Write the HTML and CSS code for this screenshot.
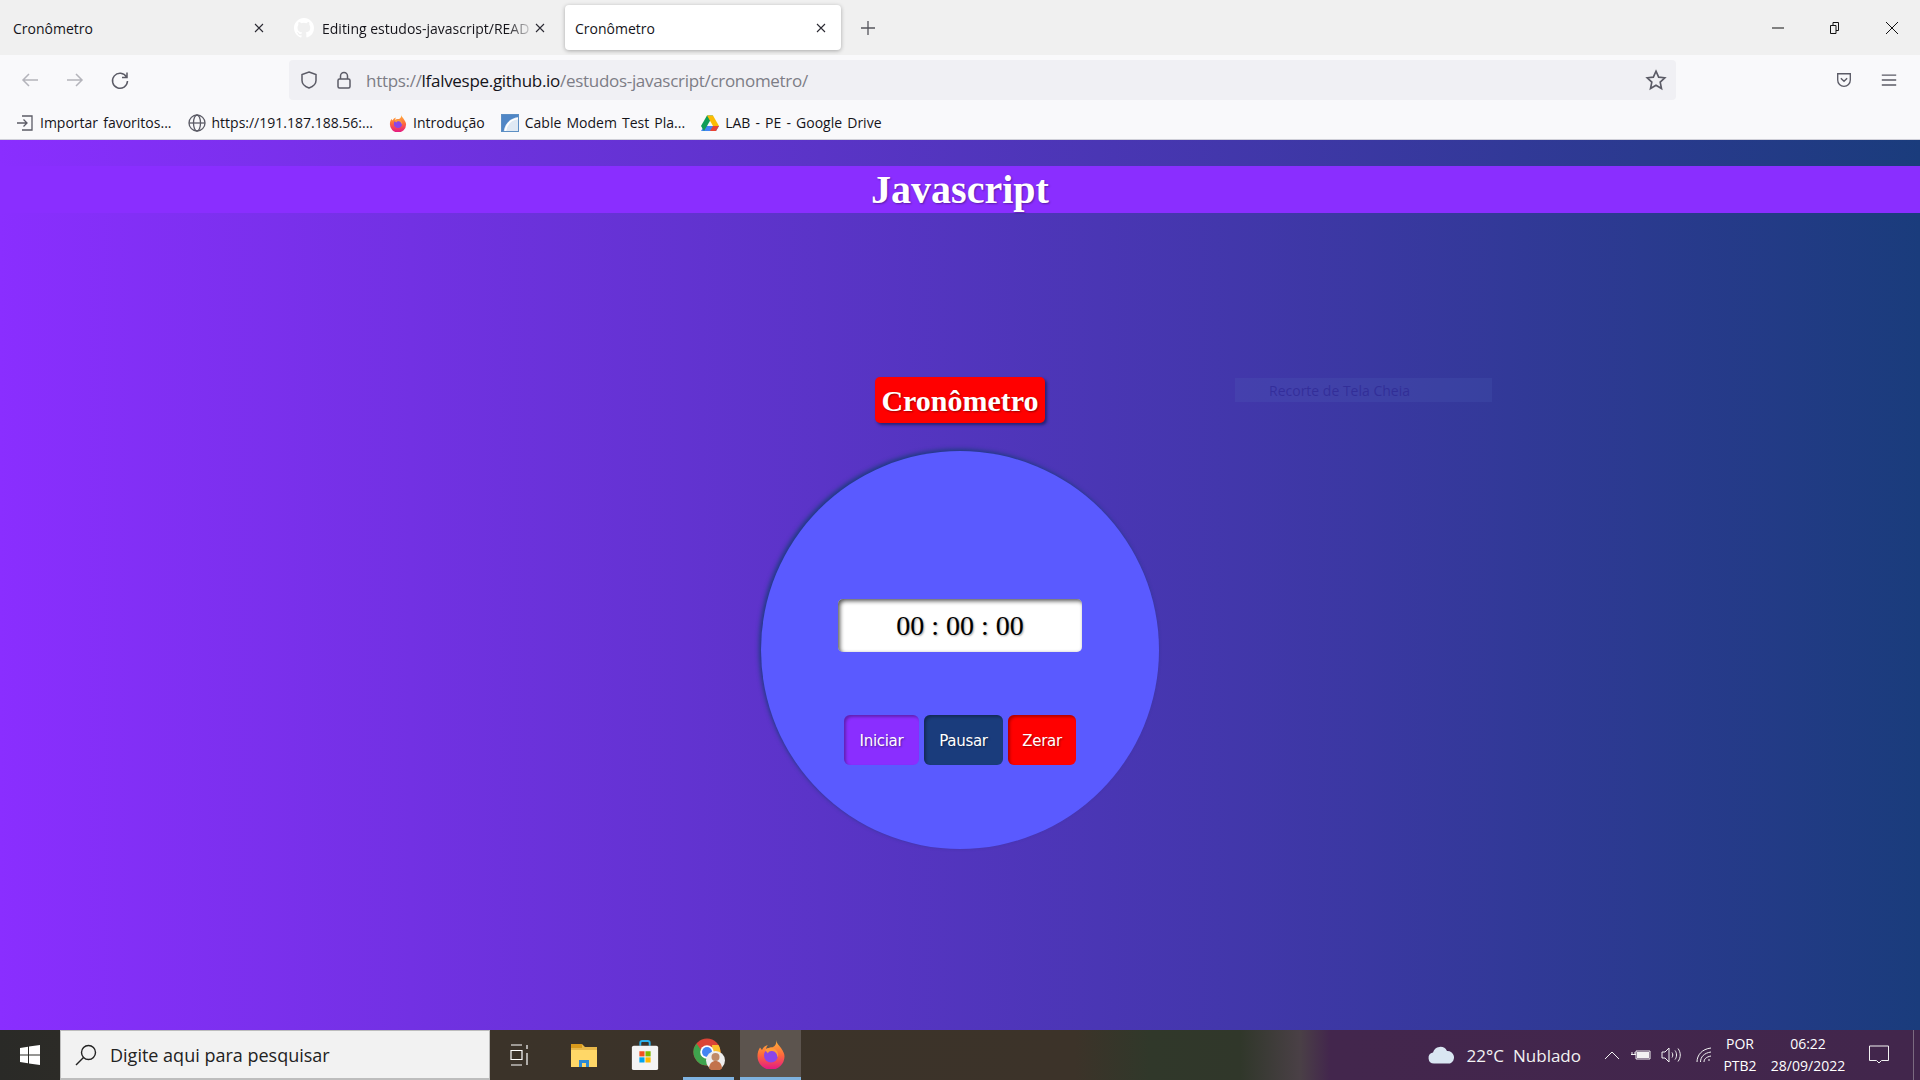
FILE: index.html
```html
<!DOCTYPE html>
<html lang="pt-BR">
<head>
  <meta charset="UTF-8">
  <title>Cronômetro</title>
  <link rel="stylesheet" href="styles.css">
</head>
<body>

<div class="tabbar">
  <div class="tab tab-first">
    <span class="tab-title">Cronômetro</span>
    <svg class="tab-x" viewBox="0 0 12 12"><path d="M2 2l8 8M10 2l-8 8"/></svg>
  </div>
  <div class="tab tab-github">
    <svg class="gh" viewBox="0 0 16 16"><path d="M8 0C3.6 0 0 3.6 0 8c0 3.5 2.3 6.5 5.5 7.6.4.1.5-.2.5-.4v-1.4c-2.2.5-2.7-1-2.7-1-.4-.9-.9-1.2-.9-1.2-.7-.5.1-.5.1-.5.8.1 1.2.8 1.2.8.7 1.2 1.9.9 2.3.7.1-.5.3-.9.5-1.1-1.8-.2-3.7-.9-3.7-4 0-.9.3-1.6.8-2.1-.1-.2-.4-1 .1-2.1 0 0 .7-.2 2.2.8a7.6 7.6 0 0 1 4 0c1.5-1 2.2-.8 2.2-.8.4 1.1.2 1.9.1 2.1.5.6.8 1.3.8 2.1 0 3.1-1.9 3.7-3.7 3.9.3.3.6.8.6 1.5v2.2c0 .2.1.5.6.4A8 8 0 0 0 16 8c0-4.4-3.6-8-8-8z"/></svg>
    <span class="tab-title fade">Editing estudos-javascript/READ</span>
    <svg class="tab-x" viewBox="0 0 12 12"><path d="M2 2l8 8M10 2l-8 8"/></svg>
  </div>
  <div class="tab tab-active">
    <span class="tab-title">Cronômetro</span>
    <svg class="tab-x" viewBox="0 0 12 12"><path d="M2 2l8 8M10 2l-8 8"/></svg>
  </div>
  <svg class="new-tab" viewBox="0 0 16 16"><path d="M8 1v14M1 8h14"/></svg>
  <div class="win-controls">
    <svg viewBox="0 0 14 14"><path d="M1 7h12"/></svg>
    <svg viewBox="0 0 14 14"><path d="M2.5 4.5h5.5v8h-5.500zM5 4.500v-3h5.500v8h-2.500"/></svg>
    <svg viewBox="0 0 14 14"><path d="M1 1l12 12M13 1l-12 12"/></svg>
  </div>
</div>

<div class="navbar">
  <div class="nav-buttons">
    <svg class="dim" viewBox="0 0 20 20"><path d="M18 10H3M9 4l-6 6 6 6"/></svg>
    <svg class="dim" viewBox="0 0 20 20"><path d="M2 10h15M11 4l6 6-6 6"/></svg>
    <svg viewBox="0 0 20 20"><path d="M16.5 7A7.5 7.5 0 1 0 17.5 11M17 2.5V7.5H12"/></svg>
  </div>
  <div class="urlbar">
    <svg class="url-icon" viewBox="0 0 20 20"><path d="M10 2l7 2.5v6c0 3.5-3 6-7 7.500-4-1.500-7-4-7-7.500v-6z"/></svg>
    <svg class="url-icon" viewBox="0 0 20 20"><rect x="4" y="9" width="12" height="9" rx="1.5"/><path d="M6.5 9V6a3.5 3.5 0 0 1 7 0v3"/></svg>
    <span class="url"><span class="url-dim">https://</span>lfalvespe.github.io<span class="url-dim">/estudos-javascript/cronometro/</span></span>
    <svg class="url-star" viewBox="0 0 20 20"><path d="M10 2l2.4 5.4 5.6.6-4.2 3.9 1.2 5.800-5-3-5 3 1.200-5.800L2 8l5.600-.6z"/></svg>
  </div>
  <div class="nav-right">
    <svg viewBox="0 0 20 20"><path d="M3 3h14v7c0 4-3 7-7 7s-7-3-7-7zM6.5 8l3.5 3.5L13.5 8"/></svg>
    <svg viewBox="0 0 20 20"><path d="M2 4.5h16M2 10h16M2 15.5h16"/></svg>
  </div>
</div>

<div class="bookmarks">
  <div class="bookmark">
    <svg class="bm-line" viewBox="0 0 18 18"><path d="M1 9h10M7.5 5.500L11 9l-3.500 3.500M6 2h10v14H6"/></svg>
    <span>Importar favoritos...</span>
  </div>
  <div class="bookmark">
    <svg class="bm-line" viewBox="0 0 18 18"><circle cx="9" cy="9" r="8"/><ellipse cx="9" cy="9" rx="3.5" ry="8"/><path d="M1 9h16"/></svg>
    <span>https://191.187.188.56:...</span>
  </div>
  <div class="bookmark">
    <svg viewBox="0 0 30 30">
      <defs>
        <linearGradient id="fx-body" x1="0" y1="0" x2="0" y2="1">
          <stop offset="0" stop-color="#ffb53a"/>
          <stop offset="0.5" stop-color="#ff6a3a"/>
          <stop offset="1" stop-color="#e31587"/>
        </linearGradient>
      </defs>
      <path d="M20 1c.5 3.5 3 5 5 8 2.5 3.5 3.5 6 3.5 8.5A13.5 13.5 0 0 1 1.5 17c0-3 .8-6 2.5-8.5L6 11c1-2.5 3-4.5 6-5-1.5 1.500-2 3-1.500 4.500 1.500-1.500 3.500-2.500 6-2.200C20 7 20.500 4 20 1z" fill="url(#fx-body)"/>
      <circle cx="15" cy="16.5" r="7" fill="#8b45e8"/>
      <path d="M9 11c3-3 9-3 12 1 1.5 2 1.5 5 .5 6.5 0-4-3-7-6-6.5-2 0-3.5 1-3.5 2.5z" fill="#ff9a3a"/>
    </svg>
    <span>Introdução</span>
  </div>
  <div class="bookmark">
    <svg viewBox="0 0 18 18"><rect width="18" height="18" fill="#dfe9f4"/><path d="M0 0h18v3C9 4 4 9 2.5 18H0z" fill="#4f86c6"/><path d="M17 4.5C10 5.5 5.5 10 4.5 17" fill="none" stroke="#fff" stroke-width="1.5"/><rect x=".5" y=".5" width="17" height="17" fill="none" stroke="#5d8fc4"/></svg>
    <span>Cable Modem Test Pla...</span>
  </div>
  <div class="bookmark">
    <svg viewBox="0 0 18 16"><path d="M6 .5h6l-6 10.5H0z" fill="#0f9d58"/><path d="M12 .5l6 10.5h-6L6 .5z" fill="#fbbc04"/><path d="M3 11h15l-3 5H0z" fill="#4285f4"/><path d="M0 11h6l-3 5z" fill="#0f9d58"/><path d="M12 11h6l-3 5h-6z" fill="#ea4335"/></svg>
    <span>LAB - PE - Google Drive</span>
  </div>
</div>

<main class="page">
  <h1 class="page-title">Javascript</h1>
  <h2 class="timer-title">Cronômetro</h2>
  <div class="circle">
    <div class="display">00 : 00 : 00</div>
    <div class="buttons">
      <button class="btn btn-start">Iniciar</button>
      <button class="btn btn-pause">Pausar</button>
      <button class="btn btn-reset">Zerar</button>
    </div>
  </div>
  <div class="snip-ghost">Recorte de Tela Cheia</div>
</main>

<footer class="taskbar">
  <div class="start">
    <svg viewBox="0 0 20 20"><path d="M0 3l8-1.2v7.6H0zM9 1.6L20 0v9.4H9zM0 10.5h8v7.7L0 17zM9 10.5h11V20L9 18.4z"/></svg>
  </div>
  <div class="search">
    <svg viewBox="0 0 22 22"><circle cx="13.5" cy="8.5" r="7"/><path d="M8.5 13.5L1 21"/></svg>
    <span>Digite aqui para pesquisar</span>
  </div>
  <div class="task-items">
    <div class="task task-view">
      <svg viewBox="0 0 20 22"><path d="M1 1h11M1 21h11M1 6.5h11v9H1zM17 1v4M17 9v12"/></svg>
    </div>
    <div class="task task-files">
      <svg viewBox="0 0 28 26"><path d="M1 2h11l3 3h12v20H1z" fill="#e8b84a"/><path d="M1 2h11v4H1z" fill="#d99a1c"/><path d="M1 8h26v17H1z" fill="#ffd767"/><path d="M9 25v-7h10v7h-3v-4h-4v4z" fill="#2b8ad6"/></svg>
    </div>
    <div class="task task-store">
      <svg viewBox="0 0 28 32"><path d="M9 6V3a2 2 0 0 1 2-2h6a2 2 0 0 1 2 2v3" fill="none" stroke="#2bb2ee" stroke-width="2"/><rect y="6" width="28" height="26" rx="2" fill="#f4f4f4"/><rect x="8" y="12" width="5.5" height="5.5" fill="#f25022"/><rect x="14.5" y="12" width="5.5" height="5.5" fill="#7fba00"/><rect x="8" y="18.5" width="5.5" height="5.5" fill="#00a4ef"/><rect x="14.5" y="18.5" width="5.5" height="5.5" fill="#ffb900"/></svg>
    </div>
    <div class="task task-open task-chrome">
      <svg viewBox="0 0 32 32">
        <circle cx="14" cy="14" r="13.5" fill="#db4437"/>
        <path d="M3.5 5.5A13.5 13.5 0 0 0 14 27.5l3-6-8-8z" fill="#3fa34d"/>
        <path d="M25.5 7A13.5 13.5 0 0 1 14 27.5l6-9-1-11.5z" fill="#fbc02d"/>
        <circle cx="14" cy="14" r="6.8" fill="#fff"/>
        <circle cx="14" cy="14" r="5" fill="#4285f4"/>
        <circle cx="22.5" cy="22.5" r="9.5" fill="#eee"/>
        <circle cx="22.5" cy="19" r="4" fill="#c08a68"/>
        <path d="M16 30.5c.5-5.5 3-7.5 6.5-7.5s6 2 6.5 7.5a9.5 9.5 0 0 1-13 0z" fill="#c2734c"/>
      </svg>
    </div>
    <div class="task task-open task-active">
      <svg viewBox="0 0 30 30">
        <path d="M20 1c.5 3.5 3 5 5 8 2.5 3.5 3.5 6 3.5 8.5A13.5 13.5 0 0 1 1.5 17c0-3 .8-6 2.5-8.5L6 11c1-2.5 3-4.5 6-5-1.5 1.5-2 3-1.5 4.500 1.500-1.500 3.500-2.500 6-2.200C20 7 20.500 4 20 1z" fill="url(#fx-body)"/>
        <circle cx="15" cy="16.5" r="7" fill="#8b45e8"/>
        <path d="M9 11c3-3 9-3 12 1 1.5 2 1.5 5 .5 6.5 0-4-3-7-6-6.500-2 0-3.500 1-3.500 2.500z" fill="#ff9a3a"/>
      </svg>
    </div>
  </div>
  <div class="tray">
    <svg class="cloud" viewBox="0 0 28 18"><path d="M6 17.5a5.5 5.5 0 0 1-1-10.900A7.500 7.500 0 0 1 19 5a6.500 6.500 0 0 1 3 12.500z" fill="#d9e6f2"/></svg>
    <span class="weather temp">22°C</span>
    <span class="weather">Nublado</span>
    <svg class="tray-icon chevron" viewBox="0 0 16 10"><path d="M1 9l7-7 7 7"/></svg>
    <svg class="tray-icon battery" viewBox="0 0 20 12"><path d="M5 2h14v8H5zM1 3v2.5M4 3v2.5M0 5.5h5"/><path class="fill" d="M6 3h12v6H6z"/></svg>
    <svg class="tray-icon sound" viewBox="0 0 20 16"><path d="M1 5h3l4-4v14l-4-4H1zM11 5.5c1 1.5 1 3.5 0 5M14 3.5c2 2.5 2 6.5 0 9M17 1.5c3 4 3 9 0 13"/></svg>
    <svg class="tray-icon wifi" viewBox="0 0 16 16"><path d="M1 15C1 8 6 2 15 1M4.5 15c0-5 3.5-9 10.5-10M8 15c0-3 2-5 7-6M12 13h2"/></svg>
    <div class="lang"><span>POR</span><span>PTB2</span></div>
    <div class="clock"><span>06:22</span><span>28/09/2022</span></div>
    <svg class="tray-icon notify" viewBox="0 0 20 20"><path d="M.5 1h19v14.5h-7L10 18l-2.500-2.500h-7z"/></svg>
    <div class="show-desktop"></div>
  </div>
</footer>

</body>
</html>
```

FILE: styles.css
```css
* {
  box-sizing: border-box;
}
html, body {
  height: 100%;
}
body {
  margin: 0;
  display: flex;
  flex-direction: column;
  overflow: hidden;
  font-family: "Open Sans", "Noto Sans", sans-serif;
  color: #15141a;
}
svg {
  display: block;
  fill: none;
}

/* tabs */
.tabbar {
  height: 55px;
  background: #f0f0f0;
  display: flex;
  align-items: center;
  flex: none;
}
.tab {
  width: 282px;
  height: 45px;
  display: flex;
  align-items: center;
  padding: 0 13px;
  font-size: 14px;
  flex: none;
}
.tab-first {
  padding-right: 17px;
}
.tab-github {
  width: 275px;
  padding: 0 11px 0 12px;
}
.tab-active {
  width: 276px;
  margin-left: 8px;
  padding: 0 14px 0 10px;
  background: #fff;
  border-radius: 4px;
  box-shadow: 0 1px 4px rgba(0, 0, 0, 0.3);
}
.tab-title {
  flex: 1;
  padding-top: 1px;
  white-space: nowrap;
}
.fade {
  -webkit-mask-image: linear-gradient(90deg, #000 185px, transparent 212px);
  mask-image: linear-gradient(90deg, #000 185px, transparent 212px);
}
.tab-x {
  width: 12px;
  height: 12px;
  stroke: #2b2a33;
  stroke-width: 1.1;
  flex: none;
}
.gh {
  width: 20px;
  height: 20px;
  fill: #fff;
  margin-right: 8px;
  flex: none;
}
.new-tab {
  width: 16px;
  height: 16px;
  margin-left: 19px;
  stroke: #55555c;
  stroke-width: 1.3;
  flex: none;
}
.win-controls {
  margin-left: auto;
  display: flex;
  gap: 43px;
  padding-right: 21px;
}
.win-controls svg {
  width: 14px;
  height: 14px;
  stroke: #111;
  stroke-width: 1;
}

/* navigation */
.navbar {
  height: 55px;
  background: #f9f9fb;
  display: flex;
  align-items: flex-start;
  padding: 5px 0 0 20px;
  flex: none;
}
.nav-buttons {
  display: flex;
  align-items: center;
  gap: 25px;
  width: 269px;
  height: 40px;
  flex: none;
}
.nav-buttons svg {
  width: 20px;
  height: 20px;
  stroke: #5b5b66;
  stroke-width: 1.5;
}
.nav-buttons .dim {
  stroke: #b4b4bb;
}
.urlbar {
  width: 1387px;
  height: 40px;
  background: #f0f0f4;
  border-radius: 4px;
  display: flex;
  align-items: center;
  padding: 0 9px 0 10px;
  font-size: 17px;
  letter-spacing: -0.3px;
  flex: none;
}
.url-icon {
  width: 20px;
  height: 20px;
  stroke: #5b5b66;
  stroke-width: 1.5;
  margin-right: 15px;
  flex: none;
}
.url {
  flex: 1;
  margin-left: -3px;
  padding-top: 1px;
}
.url-dim {
  color: #7d7d86;
}
.url-star {
  width: 22px;
  height: 22px;
  stroke: #5b5b66;
  stroke-width: 1.5;
}
.nav-right {
  margin-left: auto;
  height: 40px;
  display: flex;
  align-items: center;
  gap: 27px;
  padding-right: 22px;
  flex: none;
}
.nav-right svg {
  width: 18px;
  height: 18px;
  stroke: #5b5b66;
  stroke-width: 1.5;
}

/* bookmarks */
.bookmarks {
  height: 30px;
  background: #f9f9fb;
  border-bottom: 1px solid #cfcfd8;
  display: flex;
  align-items: flex-start;
  gap: 16px;
  padding: 3px 0 0 16px;
  font-size: 14px;
  word-spacing: 1.5px;
  flex: none;
}
.bookmark {
  display: flex;
  align-items: center;
  gap: 6px;
  white-space: nowrap;
}
.bookmark svg {
  width: 18px;
  height: 18px;
  flex: none;
}
.bm-line {
  stroke: #5b5b66;
  stroke-width: 1.3;
}

/* page */
.page {
  flex: 1;
  position: relative;
  padding-top: 26px;
  display: flex;
  flex-direction: column;
  align-items: center;
  background: linear-gradient(90deg, #8a2eff, #1a3c7c);
  font-family: "Liberation Serif", serif;
}
.page-title {
  width: 100%;
  height: 47px;
  margin: 0;
  background: #8a2eff;
  color: #fff;
  font-size: 40px;
  line-height: 47px;
  text-align: center;
  text-shadow: 1px 1px 2px rgba(0, 0, 0, 0.35);
}
.timer-title {
  width: 170px;
  height: 46px;
  margin: 164px 0 28px;
  background: #ff0000;
  color: #fff;
  border-radius: 5px;
  font-size: 30px;
  line-height: 47px;
  text-align: center;
  text-shadow: 1px 1px 2px rgba(0, 0, 0, 0.4);
  box-shadow: 2px 2px 3px rgba(26, 30, 100, 0.8);
}
.circle {
  width: 398px;
  height: 398px;
  padding-top: 148px;
  border-radius: 50%;
  background: #5a5aff;
  box-shadow: -2px -2px 4px rgba(26, 60, 124, 0.9);
  display: flex;
  flex-direction: column;
  align-items: center;
}
.display {
  width: 244px;
  height: 53px;
  background: #fff;
  border-radius: 5px;
  box-shadow: inset 2px 2px 4px #555;
  font-size: 28px;
  line-height: 53px;
  text-align: center;
  color: #000;
  text-shadow: 1px 1px 2px rgba(0, 0, 0, 0.35);
}
.buttons {
  margin-top: 63px;
  display: flex;
  gap: 5px;
}
.btn {
  height: 50px;
  border: 0;
  border-radius: 6px;
  color: #fff;
  font-family: "DejaVu Sans", sans-serif;
  font-size: 15px;
  letter-spacing: -0.3px;
  padding: 2px 0 0;
  text-shadow: 1px 1px 2px rgba(0, 0, 0, 0.4);
  box-shadow: inset 2px 2px 3px rgba(0, 0, 0, 0.3);
}
.btn-start {
  width: 75px;
  background: #8a2eff;
}
.btn-pause {
  width: 79px;
  background: #1a3c7c;
}
.btn-reset {
  width: 68px;
  background: #ff0000;
}
.snip-ghost {
  position: absolute;
  left: 1235px;
  top: 238px;
  width: 257px;
  height: 24px;
  padding-left: 34px;
  background: rgba(90, 110, 190, 0.16);
  color: rgba(40, 30, 140, 0.55);
  font-family: "Open Sans", sans-serif;
  font-size: 14px;
  line-height: 25px;
}

/* windows taskbar */
.taskbar {
  height: 50px;
  display: flex;
  align-items: stretch;
  flex: none;
  color: #fff;
  background: linear-gradient(90deg, #2a2a27 0, #2c2b27 60px, #3b3329 490px, #3c3329 1075px, #30382a 1150px, #30372a 1240px, #4a4046 1300px, #43264d 1330px, #42264c 1920px);
}
.start {
  width: 60px;
  display: flex;
  align-items: center;
  justify-content: center;
  flex: none;
}
.start svg {
  width: 20px;
  height: 20px;
  fill: #fff;
}
.search {
  width: 430px;
  background: #f2f2f2;
  border: 1px solid #bdbdbd;
  border-bottom-width: 2px;
  color: #222;
  display: flex;
  align-items: center;
  gap: 13px;
  padding-left: 14px;
  font-size: 18px;
  flex: none;
}
.search svg {
  width: 22px;
  height: 22px;
  stroke: #222;
  stroke-width: 1.4;
}
.task-items {
  display: flex;
  flex: none;
}
.task {
  display: flex;
  align-items: center;
  justify-content: center;
  flex: none;
}
.task svg {
  width: 28px;
  height: 30px;
}
.task-view {
  width: 60px;
}
.task-view svg {
  width: 20px;
  height: 22px;
  stroke: #fff;
  stroke-width: 1.2;
}
.task-files {
  width: 68px;
}
.task-store {
  width: 54px;
}
.task-open {
  border-bottom: 3px solid #7fb3e0;
  padding-top: 1px;
}
.task-chrome {
  width: 51px;
  margin-left: 11px;
}
.task-chrome svg {
  width: 32px;
  height: 32px;
}
.task-active {
  background: #5c544e;
  width: 61px;
  margin-left: 6px;
}
.task-active svg {
  width: 30px;
  height: 30px;
}
.tray {
  margin-left: auto;
  display: flex;
  align-items: center;
  font-size: 17px;
  flex: none;
}
.cloud {
  width: 28px;
  height: 18px;
  margin-right: 11px;
}
.weather {
  margin-right: 13px;
  color: #f2f2f2;
}
.temp {
  margin-right: 9px;
}
.tray-icon {
  stroke: #f2f2f2;
  stroke-width: 1;
}
.chevron {
  width: 16px;
  height: 10px;
  margin-left: 10px;
}
.battery {
  width: 20px;
  height: 12px;
  margin-left: 11px;
}
.battery .fill {
  fill: #f2f2f2;
  stroke: none;
}
.sound {
  width: 20px;
  height: 16px;
  margin-left: 10px;
}
.wifi {
  width: 16px;
  height: 16px;
  margin-left: 15px;
}
.lang, .clock {
  display: flex;
  flex-direction: column;
  align-items: center;
  font-size: 14px;
  line-height: 22px;
}
.lang {
  width: 36px;
  margin-left: 10px;
}
.clock {
  width: 76px;
  margin-left: 12px;
}
.notify {
  width: 20px;
  height: 20px;
  margin-left: 23px;
}
.show-desktop {
  width: 1px;
  height: 100%;
  margin-left: 24px;
  margin-right: 6px;
  background: #7b6a80;
}
```
